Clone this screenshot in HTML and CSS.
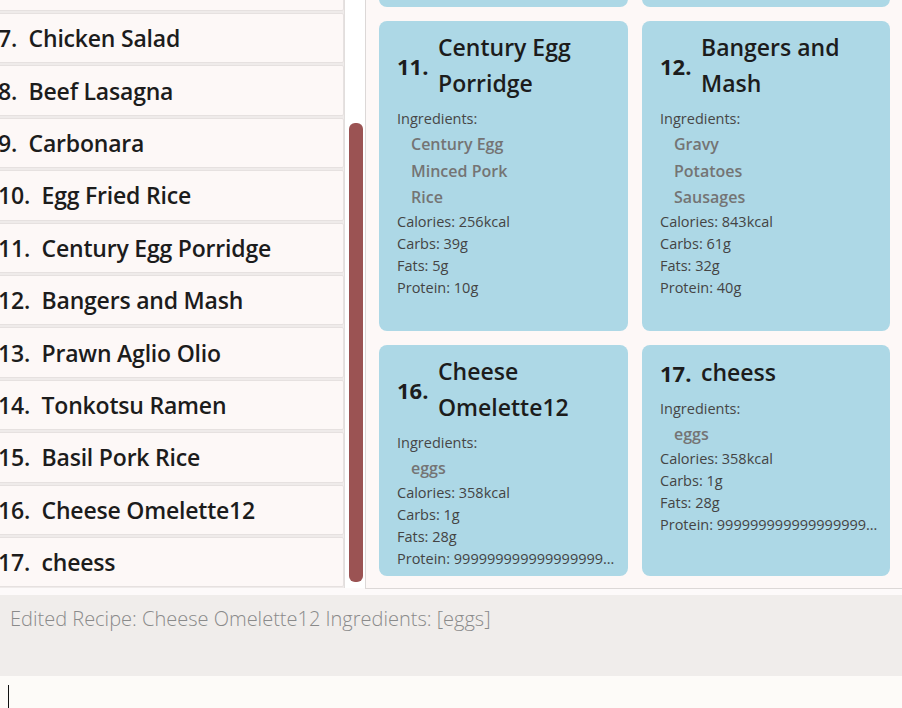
FILE: index.html
```html
<!DOCTYPE html>
<html>
<head>
<meta charset="utf-8">
<link rel="stylesheet" href="styles.css">
</head>
<body>
<div class="app">
  <div class="main">
    <div class="list-pane">
      <div class="list">
        <ul class="list-inner">
          <li class="cell"></li>
          <li class="cell">7.  Chicken Salad</li>
          <li class="cell">8.  Beef Lasagna</li>
          <li class="cell">9.  Carbonara</li>
          <li class="cell">10.  Egg Fried Rice</li>
          <li class="cell">11.  Century Egg Porridge</li>
          <li class="cell">12.  Bangers and Mash</li>
          <li class="cell">13.  Prawn Aglio Olio</li>
          <li class="cell">14.  Tonkotsu Ramen</li>
          <li class="cell">15.  Basil Pork Rice</li>
          <li class="cell">16.  Cheese Omelette12</li>
          <li class="cell">17.  cheess</li>
        </ul>
      </div>
      <div class="scrollbar"><div class="thumb"></div></div>
    </div>
    <div class="cards-pane">
      <div class="grid">
        <div class="card partial"></div>
        <div class="card partial"></div>

        <div class="card tall">
          <div class="title"><span class="num">11.</span><span class="name">Century Egg Porridge</span></div>
          <div class="label">Ingredients:</div>
          <ul class="ingredients"><li>Century Egg</li><li>Minced Pork</li><li>Rice</li></ul>
          <div class="stat">Calories: 256kcal</div>
          <div class="stat">Carbs: 39g</div>
          <div class="stat">Fats: 5g</div>
          <div class="stat">Protein: 10g</div>
        </div>
        <div class="card tall">
          <div class="title"><span class="num">12.</span><span class="name">Bangers and Mash</span></div>
          <div class="label">Ingredients:</div>
          <ul class="ingredients"><li>Gravy</li><li>Potatoes</li><li>Sausages</li></ul>
          <div class="stat">Calories: 843kcal</div>
          <div class="stat">Carbs: 61g</div>
          <div class="stat">Fats: 32g</div>
          <div class="stat">Protein: 40g</div>
        </div>

        <div class="card">
          <div class="title"><span class="num">16.</span><span class="name">Cheese Omelette12</span></div>
          <div class="label">Ingredients:</div>
          <ul class="ingredients"><li>eggs</li></ul>
          <div class="stat">Calories: 358kcal</div>
          <div class="stat">Carbs: 1g</div>
          <div class="stat">Fats: 28g</div>
          <div class="stat">Protein: 99999999999999999999999</div>
        </div>
        <div class="card">
          <div class="title"><span class="num">17.</span><span class="name">cheess</span></div>
          <div class="label">Ingredients:</div>
          <ul class="ingredients"><li>eggs</li></ul>
          <div class="stat">Calories: 358kcal</div>
          <div class="stat">Carbs: 1g</div>
          <div class="stat">Fats: 28g</div>
          <div class="stat">Protein: 99999999999999999999999</div>
        </div>
      </div>
    </div>
  </div>
  <div class="result">Edited Recipe: Cheese Omelette12 Ingredients: [eggs]</div>
  <div class="command"><span class="caret"></span></div>
</div>
</body>
</html>
```
FILE: styles.css
```css
html, body {
  margin: 0;
  padding: 0;
}
body {
  background: #fdfafa;
  font-family: "Open Sans", "Noto Sans", sans-serif;
  color: #222;
}
.app {
  width: 902px;
  height: 708px;
  display: flex;
  flex-direction: column;
  overflow: hidden;
}
.main {
  height: 589px;
  display: flex;
  flex-shrink: 0;
}
.list-pane {
  width: 365px;
  display: flex;
  flex-shrink: 0;
  height: 588px;
}
.list {
  width: 344px;
  overflow: hidden;
  background: #efebea;
  border-right: 1px solid #e2dedd;
}
.list-inner {
  list-style: none;
  margin: -39.4px 0 0 -3px;
  padding: 0;
}
.cell {
  box-sizing: border-box;
  height: 50.4px;
  margin-bottom: 2px;
  background: #fdf8f7;
  border: 1px solid #e6e1e0;
  border-radius: 2px;
  display: flex;
  align-items: center;
  padding-left: 0;
  white-space: pre;
  font-size: 23px;
  font-weight: 560;
  color: #1c1c1c;
  letter-spacing: -0.2px;
}
.scrollbar {
  flex: 1;
  background: #ffffff;
  padding: 123px 2px 0 4px;
  box-sizing: border-box;
}
.thumb {
  width: 14px;
  height: 459px;
  background: #9b5353;
  border-radius: 6px;
}
.cards-pane {
  flex: 1;
  height: 588px;
  border-left: 1px solid #dcd8d7;
  border-bottom: 1px solid #dcd8d7;
  background: #fdf8f7;
  overflow: hidden;
}
.grid {
  display: grid;
  grid-template-columns: 249px 248px;
  column-gap: 14px;
  row-gap: 14px;
  padding: 0 12px 0 13px;
  margin-top: -93px;
}
.card {
  box-sizing: border-box;
  background: #add8e6;
  border-radius: 8px;
  padding: 8px 11px 6px 18px;
  min-width: 0;
}
.card.partial {
  height: 100px;
}
.card.tall {
  min-height: 310px;
}
.title {
  display: flex;
  align-items: center;
  font-size: 23px;
  line-height: 36px;
  color: #1c1c1c;
}
.num {
  font-weight: 700;
  font-size: 22px;
  width: 41px;
  flex-shrink: 0;
  padding-top: 2px;
}
.name {
  font-weight: 560;
  max-width: 175px;
}
.label {
  margin-top: 7px;
  font-size: 14.5px;
  line-height: 22px;
  color: #474747;
}
.ingredients {
  list-style: none;
  margin: 1px 0 0 0;
  padding: 0 0 0 14px;
  font-size: 16px;
  font-weight: 580;
  line-height: 26.5px;
  color: #747474;
}
.stat {
  font-size: 14.5px;
  line-height: 22px;
  color: #444;
  white-space: nowrap;
  overflow: hidden;
  text-overflow: ellipsis;
}
.result {
  margin-top: 6px;
  height: 81px;
  flex-shrink: 0;
  box-sizing: border-box;
  background: #f0edeb;
  padding: 10px 10px;
  font-size: 20px;
  font-weight: 300;
  line-height: 28px;
  color: #8a8a8a;
}
.command {
  flex: 1;
  background: #fdfbf8;
  padding: 9px 0 0 8px;
}
.caret {
  display: block;
  width: 1px;
  height: 24px;
  background: #111;
}
```
